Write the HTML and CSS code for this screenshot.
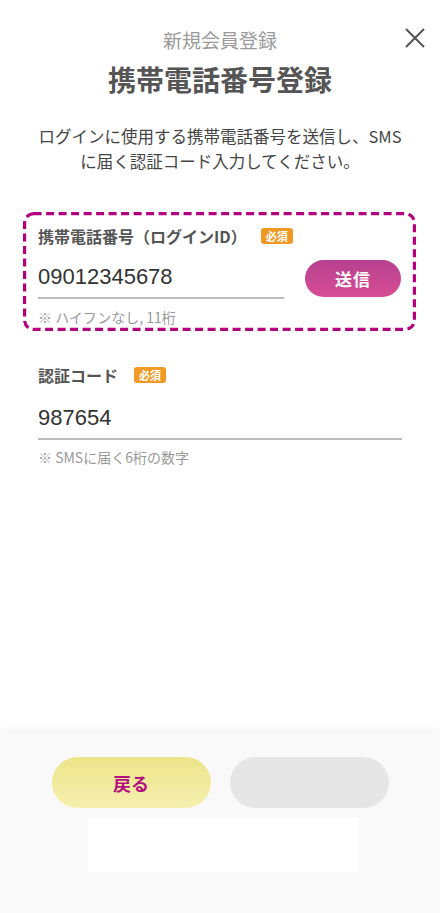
FILE: index.html
```html
<!DOCTYPE html>
<html lang="ja">
<head>
<meta charset="utf-8">
<title>携帯電話番号登録</title>
<link rel="stylesheet" href="styles.css">
</head>
<body>
<div class="page">
  <header class="header">
    <p class="subtitle">新規会員登録</p>
    <h1 class="title">携帯電話番号登録</h1>
    <button class="close" aria-label="閉じる">
      <svg width="22" height="22" viewBox="0 0 22 22"><path d="M2 2L20 20M20 2L2 20" stroke="#555" stroke-width="2" fill="none"/></svg>
    </button>
  </header>

  <p class="lead">ログインに使用する携帯電話番号を送信し、SMS<br>に届く認証コード入力してください。</p>

  <section class="field field-highlight">
    <div class="label-row">
      <span class="label">携帯電話番号（ログインID）</span>
      <span class="badge badge-first">必須</span>
    </div>
    <div class="input-row">
      <div class="input-col">
        <div class="input">09012345678</div>
      </div>
      <button class="send">送信</button>
    </div>
    <p class="hint">※ ハイフンなし, 11桁</p>
  </section>

  <section class="field field-plain">
    <div class="label-row">
      <span class="label">認証コード</span>
      <span class="badge">必須</span>
    </div>
    <div class="input input-code">987654</div>
    <p class="hint hint-code">※ SMSに届く6桁の数字</p>
  </section>

  <footer class="footer">
    <div class="buttons">
      <button class="btn btn-back">戻る</button>
      <button class="btn btn-next"></button>
    </div>
    <div class="placeholder"></div>
  </footer>
</div>
</body>
</html>
```

FILE: styles.css
```css
* { box-sizing: border-box; }
html, body { margin: 0; padding: 0; background: #fff; }
body {
  font-family: "Noto Sans CJK JP", "Noto Sans", sans-serif;
  color: #444;
}
.page {
  min-height: 913px;
  display: flex;
  flex-direction: column;
}
p, h1 { margin: 0; }
button { font-family: inherit; border: 0; padding: 0; }

.header {
  position: relative;
  padding-top: 28px;
  text-align: center;
}
.subtitle {
  font-size: 19px;
  line-height: 24px;
  color: #9a9a9a;
}
.title {
  margin-top: 9px;
  font-size: 28px;
  line-height: 36px;
  font-weight: 700;
  color: #555;
}
.close {
  position: absolute;
  right: 14px;
  top: 27px;
  width: 22px;
  height: 22px;
  background: none;
}
.close svg { display: block; }

.lead {
  margin-top: 27px;
  text-align: center;
  font-size: 16.5px;
  line-height: 25px;
  color: #444;
}

.field-highlight {
  margin: 38px 24px 0 23px;
  height: 119px;
  border-radius: 10px;
  padding: 14px 15px 0 15px;
  background: url("data:image/svg+xml,%3Csvg xmlns='http://www.w3.org/2000/svg' width='393' height='119'%3E%3Crect x='1.6' y='1.6' width='389.8' height='115.8' rx='9' ry='9' fill='none' stroke='%23b3007d' stroke-width='3.2' stroke-dasharray='8 4.5'/%3E%3C/svg%3E") no-repeat 0 0;
}
.label-row {
  display: flex;
  align-items: center;
  height: 20px;
}
.label {
  font-size: 16px;
  font-weight: 700;
  color: #555;
  line-height: 20px;
}
.badge {
  margin-left: 16px;
  width: 32px;
  height: 16px;
  border-radius: 3px;
  background: #f09a25;
  color: #fff;
  font-size: 11px;
  font-weight: 700;
  line-height: 16px;
  text-align: center;
}
.badge-first { margin-left: 14px; }
.input-row {
  display: flex;
  align-items: flex-start;
  gap: 21px;
  margin-top: 16px;
}
.input-col { flex: 1; }
.input {
  font-family: "Liberation Sans", "Noto Sans", sans-serif;
  font-size: 22px;
  line-height: 30px;
  color: #333;
  padding-bottom: 5px;
  border-bottom: 2px solid #bdbdbd;
}
.send {
  width: 96px;
  height: 37px;
  margin-top: -2px;
  border-radius: 19px;
  background: linear-gradient(180deg, #b6408f 0%, #d84d94 100%);
  color: #fff;
  font-size: 17px;
  font-weight: 700;
  letter-spacing: 1px;
}
.hint {
  margin-top: 9px;
  font-size: 14px;
  line-height: 18px;
  color: #999;
}

.field-plain {
  margin-top: 34px;
  padding: 0 38px;
}
.input-code { margin-top: 18px; }
.hint-code { margin-top: 8px; }

.footer {
  margin-top: auto;
  background: #f9f9f9;
  box-shadow: 0 -3px 10px rgba(0,0,0,0.05);
  padding: 24px 0 41px;
}
.buttons {
  display: flex;
  justify-content: center;
  gap: 19px;
}
.btn {
  width: 159px;
  height: 51px;
  border-radius: 26px;
}
.btn-back {
  background: linear-gradient(180deg, #ece489 0%, #f6f0b0 100%);
  color: #b30f80;
  font-size: 18px;
  font-weight: 700;
}
.btn-next {
  background: #e6e6e6;
}
.placeholder {
  margin: 10px 0 0 88px;
  width: 271px;
  height: 54px;
  background: #fff;
}
```
